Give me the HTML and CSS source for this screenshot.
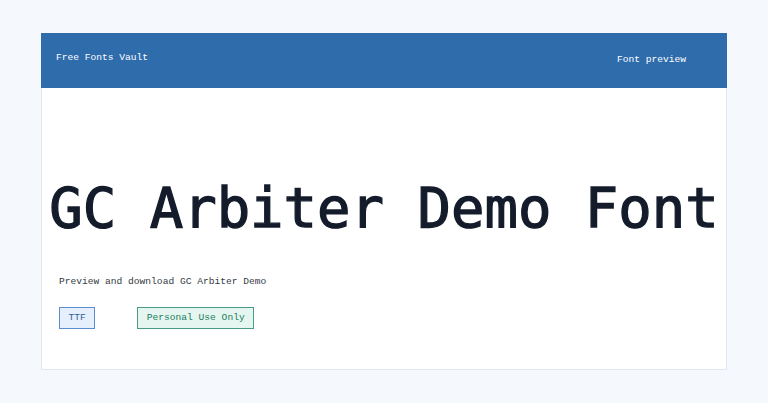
FILE: index.html
```html
<!DOCTYPE html>
<html lang="en">

<head>
    <meta charset="UTF-8">
    <meta name="viewport" content="width=device-width, initial-scale=1.0">
    <title>GC Arbiter Demo Font</title>
    <link rel="stylesheet" href="styles.css">
</head>

<body>
    <div class="card">
        <header class="top">
            <div class="brand">Free Fonts Vault</div>
            <nav class="nav">Font preview</nav>
        </header>
        <main class="main">
            <h1 class="title">GC Arbiter Demo Font</h1>
            <p class="desc">Preview and download GC Arbiter Demo</p>
            <div class="tags">
                <span class="tag tag-format">TTF</span>
                <span class="tag tag-license">Personal Use Only</span>
            </div>
        </main>
    </div>
</body>

</html>
```

FILE: styles.css
```css
body {
    margin: 0;
    padding: 33px 41px;
    background-color: #f5f9fe;
    font-family: "Liberation Mono", "DejaVu Sans Mono", monospace;
}

.card {
    height: 337px;
    box-sizing: border-box;
    background-color: #ffffff;
    border: 1px solid #e1e7f0;
    display: flex;
    flex-direction: column;
}

.top {
    height: 55px;
    margin: -1px -1px 0;
    box-sizing: border-box;
    background-color: #2f6cac;
    color: #ffffff;
    display: flex;
    justify-content: space-between;
    align-items: flex-start;
    padding: 19px 40px 0 15px;
    font-size: 9.6px;
}

.nav {
    margin-top: 2px;
    margin-right: 1px;
}

.main {
    flex: 1;
    padding: 87px 0 0;
}

.title {
    margin: 0;
    text-align: center;
    font-family: "DejaVu Sans Mono", monospace;
    font-weight: normal;
    font-size: 55.6px;
    line-height: 65px;
    color: #141c2c;
    -webkit-text-stroke: 1.3px #141c2c;
}

.desc {
    margin: 35px 0 0 17px;
    font-size: 9.6px;
    line-height: 14px;
    color: #333a44;
}

.tags {
    display: flex;
    gap: 42px;
    margin: 18px 0 0 17px;
}

.tag {
    height: 22px;
    box-sizing: border-box;
    padding: 0 8.5px;
    font-size: 9.6px;
    line-height: 20px;
}

.tag-format {
    background-color: #e6effc;
    border: 1px solid #5a8ed0;
    color: #2f5f9c;
}

.tag-license {
    background-color: #e5f6f0;
    border: 1px solid #4a9a88;
    color: #1d7a60;
}
```
